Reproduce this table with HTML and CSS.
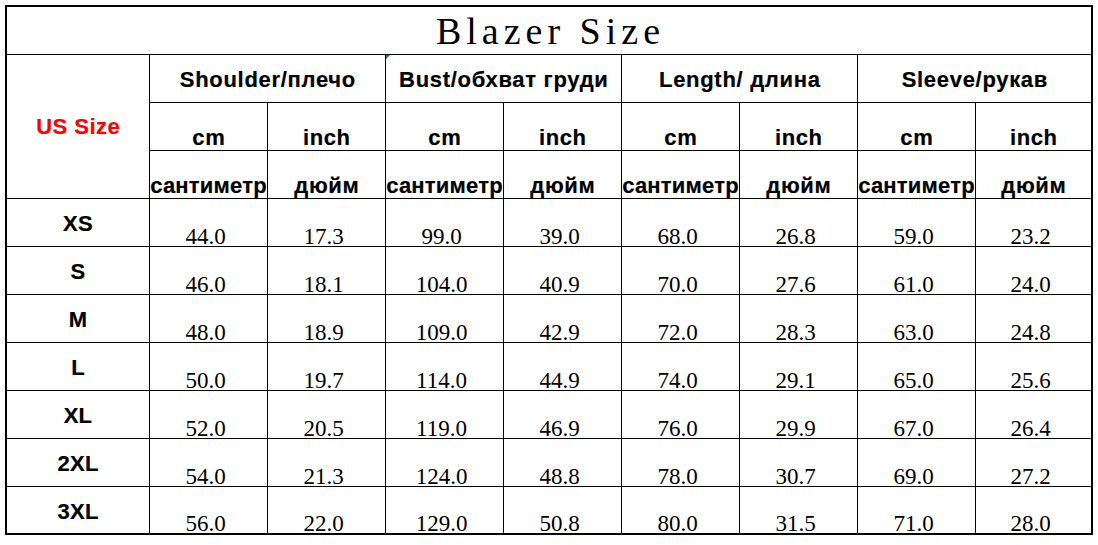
FILE: index.html
```html
<!DOCTYPE html>
<html lang="en">
<head>
<meta charset="utf-8">
<title>Blazer Size</title>
<link rel="stylesheet" href="styles.css">
</head>
<body>
<div class="chart">
  <div class="cell title">Blazer Size</div>

  <div class="cell us">US Size</div>
  <div class="cell group">Shoulder/плечо</div>
  <div class="cell group marked">Bust/обхват груди</div>
  <div class="cell group">Length/ длина</div>
  <div class="cell group">Sleeve/рукав</div>

  <div class="cell unit">cm</div><div class="cell unit">inch</div>
  <div class="cell unit">cm</div><div class="cell unit">inch</div>
  <div class="cell unit">cm</div><div class="cell unit">inch</div>
  <div class="cell unit">cm</div><div class="cell unit">inch</div>

  <div class="cell unit long">сантиметр</div><div class="cell unit">дюйм</div>
  <div class="cell unit long">сантиметр</div><div class="cell unit">дюйм</div>
  <div class="cell unit long">сантиметр</div><div class="cell unit">дюйм</div>
  <div class="cell unit long">сантиметр</div><div class="cell unit">дюйм</div>

  <div class="cell size">XS</div>
  <div class="cell val">44.0</div><div class="cell val">17.3</div><div class="cell val">99.0</div><div class="cell val">39.0</div><div class="cell val">68.0</div><div class="cell val">26.8</div><div class="cell val">59.0</div><div class="cell val">23.2</div>

  <div class="cell size">S</div>
  <div class="cell val">46.0</div><div class="cell val">18.1</div><div class="cell val">104.0</div><div class="cell val">40.9</div><div class="cell val">70.0</div><div class="cell val">27.6</div><div class="cell val">61.0</div><div class="cell val">24.0</div>

  <div class="cell size">M</div>
  <div class="cell val">48.0</div><div class="cell val">18.9</div><div class="cell val">109.0</div><div class="cell val">42.9</div><div class="cell val">72.0</div><div class="cell val">28.3</div><div class="cell val">63.0</div><div class="cell val">24.8</div>

  <div class="cell size">L</div>
  <div class="cell val">50.0</div><div class="cell val">19.7</div><div class="cell val">114.0</div><div class="cell val">44.9</div><div class="cell val">74.0</div><div class="cell val">29.1</div><div class="cell val">65.0</div><div class="cell val">25.6</div>

  <div class="cell size">XL</div>
  <div class="cell val">52.0</div><div class="cell val">20.5</div><div class="cell val">119.0</div><div class="cell val">46.9</div><div class="cell val">76.0</div><div class="cell val">29.9</div><div class="cell val">67.0</div><div class="cell val">26.4</div>

  <div class="cell size">2XL</div>
  <div class="cell val">54.0</div><div class="cell val">21.3</div><div class="cell val">124.0</div><div class="cell val">48.8</div><div class="cell val">78.0</div><div class="cell val">30.7</div><div class="cell val">69.0</div><div class="cell val">27.2</div>

  <div class="cell size">3XL</div>
  <div class="cell val">56.0</div><div class="cell val">22.0</div><div class="cell val">129.0</div><div class="cell val">50.8</div><div class="cell val">80.0</div><div class="cell val">31.5</div><div class="cell val">71.0</div><div class="cell val">28.0</div>
</div>
</body>
</html>
```
FILE: styles.css
```css
html, body {
  margin: 0;
  padding: 0;
  background: #fff;
}

.chart {
  margin: 5px 0 0 5px;
  width: 1084px;
  border: 2px solid #000;
  background: #000;
  display: grid;
  grid-template-columns: 142px repeat(7, 117px) 115px;
  grid-template-rows: repeat(10, 47px) 46px;
  gap: 1px;
  color: #000;
  font-family: "Liberation Sans", Arial, sans-serif;
}

.cell {
  background: #fff;
  display: flex;
  justify-content: center;
  white-space: nowrap;
  overflow: hidden;
  position: relative;
}

.title {
  grid-column: 1 / -1;
  font-family: "Liberation Serif", "Times New Roman", serif;
  font-size: 38px;
  letter-spacing: 5px;
  padding-left: 3px;
  line-height: 47px;
  align-items: flex-start;
  padding-top: 1px;
}

.us {
  grid-row: span 3;
  color: #f00;
  font-weight: bold;
  font-size: 22px;
  letter-spacing: 0.5px;
  padding-left: 0.5px;
  line-height: 143px;
  -webkit-text-stroke: 0.2px #f00;
}

.group {
  grid-column: span 2;
  font-weight: bold;
  font-size: 22px;
  letter-spacing: 0.7px;
  padding-left: 0.7px;
  line-height: 47px;
  padding-top: 1px;
  -webkit-text-stroke: 0.2px #000;
}

.marked::before {
  content: "";
  position: absolute;
  left: 0;
  top: 0;
  border-top: 4px solid #1a8a1a;
  border-right: 4px solid transparent;
}

.unit {
  font-weight: bold;
  font-size: 22px;
  letter-spacing: 0.6px;
  padding-left: 0.6px;
  line-height: 25px;
  align-items: flex-end;
  -webkit-text-stroke: 0.2px #000;
}

.long {
  letter-spacing: 0.2px;
  padding-left: 0;
}

.size {
  font-weight: bold;
  font-size: 22px;
  letter-spacing: 0.3px;
  line-height: 47px;
  padding-top: 1px;
  -webkit-text-stroke: 0.2px #000;
}

.val {
  font-family: "Liberation Serif", "Times New Roman", serif;
  font-size: 23px;
  line-height: 19px;
  align-items: flex-end;
  padding-right: 6px;
  overflow: visible;
}
```
